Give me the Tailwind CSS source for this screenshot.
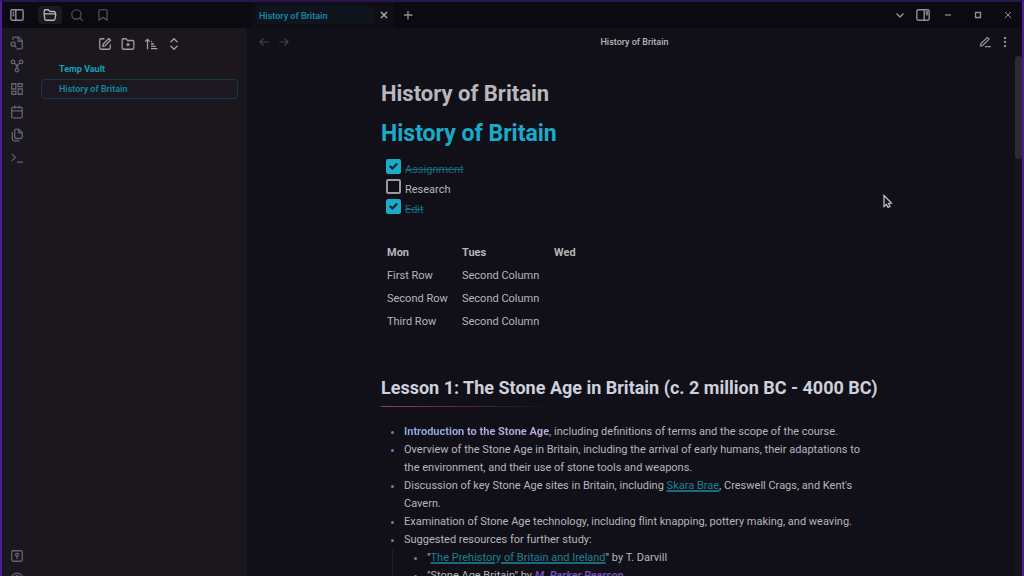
<!DOCTYPE html>
<html lang="en">
<head>
<meta charset="utf-8">
<meta name="viewport" content="width=device-width, initial-scale=1">
<title>History of Britain</title>
<script src="https://cdn.jsdelivr.net/npm/@tailwindcss/browser@4"></script>
</head>
<body class="h-screen overflow-hidden bg-[#111018] font-['Roboto',sans-serif] text-[11px] text-[#b6b6ba]">
<svg class="hidden" aria-hidden="true">
  <symbol id="check" viewBox="0 0 14 14"><path d="M3.500 6.500l2.500 2.300 4.500-4.600" fill="none" stroke="currentColor" stroke-width="2"/></symbol>
</svg>
<div class="flex h-full flex-col overflow-hidden border-x-2 border-t-2 border-x-[#501c94] border-t-[#29154b]">
  <header class="flex h-[26px] shrink-0 bg-[#0b0a11] text-[#929096]">
    <div class="flex w-[244px] shrink-0 items-center pl-2">
      <button aria-label="Toggle left sidebar"><svg class="size-3.5" viewBox="0 0 24 24" fill="none" stroke="currentColor" stroke-width="2.4"><rect x="1.500" y="3" width="21" height="18" rx="2.500"/><path d="M10 3v18M4.500 7h3M4.500 10h3M4.500 13h3"/></svg></button>
      <button aria-label="Files" class="ml-3.5 flex h-[18px] w-6 items-center justify-center rounded bg-[#1b1a21] text-[#b8b6bb]"><svg class="size-3.5" viewBox="0 0 24 24" fill="none" stroke="currentColor" stroke-width="2.2" stroke-linejoin="round"><path d="M2 10V5a2 2 0 0 1 2-2h5l3 3h7a2 2 0 0 1 2 2v2M2 10h20l-1.500 9a2 2 0 0 1-2 2H5a2 2 0 0 1-2-2z"/></svg></button>
      <button aria-label="Search" class="ml-2 text-[#59575f]"><svg class="size-3.5" viewBox="0 0 24 24" fill="none" stroke="currentColor" stroke-width="2"><circle cx="11" cy="11" r="8"/><path d="M17 17l5 5"/></svg></button>
      <button aria-label="Bookmarks" class="ml-3 text-[#59575f]"><svg class="size-3.5" viewBox="0 0 24 24" fill="none" stroke="currentColor" stroke-width="2" stroke-linejoin="round"><path d="M19 21l-7-5-7 5V5a2 2 0 0 1 2-2h10a2 2 0 0 1 2 2z"/></svg></button>
    </div>
    <div class="flex grow items-center">
      <div class="ml-1.5 flex h-full w-[142px] items-center justify-between bg-[#0f0e15] pr-1 pl-1">
        <span class="w-[118px] rounded bg-[#0f141f] pt-0.5 pl-[3px] text-[9px] leading-4 font-semibold text-[#16879d]">History of Britain</span>
        <button aria-label="Close tab" class="text-[#a8a7ac]"><svg class="size-3" viewBox="0 0 12 12" fill="none" stroke="currentColor" stroke-width="1.500"><path d="M3 3l6 6M9 3l-6 6"/></svg></button>
      </div>
      <button aria-label="New tab" class="ml-2"><svg class="size-3" viewBox="0 0 12 12" fill="none" stroke="currentColor" stroke-width="1.300"><path d="M6 2v8.500M2 6h8.500"/></svg></button>
      <div class="ml-auto flex items-center pr-2">
        <button aria-label="Tab list"><svg class="size-3" viewBox="0 0 12 12" fill="none" stroke="currentColor" stroke-width="1.500"><path d="M2.500 4.500L6 8l3.500-3.500"/></svg></button>
        <button aria-label="Toggle right sidebar" class="ml-2.5"><svg class="size-3.5" viewBox="0 0 24 24" fill="none" stroke="currentColor" stroke-width="2.4"><rect x="1.500" y="3" width="21" height="18" rx="2.500"/><path d="M14 3v18M16.500 7h3.500M16.500 10h3.500M19 5v8"/></svg></button>
        <button aria-label="Minimize" class="ml-3"><svg class="size-3" viewBox="0 0 12 12" stroke="currentColor" stroke-width="1.200"><path d="M3 6h6"/></svg></button>
        <button aria-label="Maximize" class="ml-[18px]"><svg class="size-3" viewBox="0 0 12 12" fill="none" stroke="currentColor" stroke-width="1.300"><path d="M3.500 3.500h5v5h-5z"/></svg></button>
        <button aria-label="Close window" class="ml-[18px]"><svg class="size-3" viewBox="0 0 12 12" fill="none" stroke="currentColor"><path d="M3 3l6 6M9 3l-6 6"/></svg></button>
      </div>
    </div>
  </header>

  <div class="flex min-h-0 grow">
    <nav aria-label="Ribbon" class="flex w-[30px] shrink-0 flex-col items-center bg-[#1a171f] pt-2 text-[#66636b]">
      <div class="flex flex-col gap-[9px]">
        <button aria-label="Quick switcher"><svg class="block size-3.5" viewBox="0 0 24 24" fill="none" stroke="currentColor" stroke-width="2.200" stroke-linejoin="round"><path d="M5 7V4a2 2 0 0 1 2-2h8l6 6v12a2 2 0 0 1-2 2h-8M14 2v7h7"/><circle cx="5.500" cy="14" r="3.500"/><path d="M8 17l3 3"/></svg></button>
        <button aria-label="Graph view"><svg class="block size-3.5" viewBox="0 0 24 24" fill="none" stroke="currentColor" stroke-width="2.200"><circle cx="5" cy="5" r="3"/><circle cx="19" cy="5" r="3"/><circle cx="12" cy="19" r="3"/><circle cx="12" cy="11" r="1.500"/><path d="M7 7l4 3M17 7l-4 3M12 12v4"/></svg></button>
        <button aria-label="Canvas"><svg class="block size-3.5" viewBox="0 0 24 24" fill="none" stroke="currentColor" stroke-width="2.200"><path d="M3 3h7v9H3zM14 3h7v5h-7zM14 12h7v9h-7zM3 16h7v5H3z"/></svg></button>
        <button aria-label="Daily note"><svg class="block size-3.5" viewBox="0 0 24 24" fill="none" stroke="currentColor" stroke-width="2.200"><rect x="3" y="4" width="18" height="18" rx="2"/><path d="M3 10h18M8 1v5M16 1v5"/></svg></button>
        <button aria-label="Templates"><svg class="block size-3.5" viewBox="0 0 24 24" fill="none" stroke="currentColor" stroke-width="2.200" stroke-linejoin="round"><path d="M15 2h-5a2 2 0 0 0-2 2v12a2 2 0 0 0 2 2h9a2 2 0 0 0 2-2V8zM15 2v6h6M4 7v12a3 3 0 0 0 3 3h9"/></svg></button>
        <button aria-label="Command palette"><svg class="block size-3.5" viewBox="0 0 24 24" fill="none" stroke="currentColor" stroke-width="2.200"><path d="M3 5l6 6-6 6M12 19h10"/></svg></button>
      </div>
      <div class="mt-auto -mb-2.5 flex flex-col gap-[9px]">
        <button aria-label="Open another vault"><svg class="block size-3.5" viewBox="0 0 24 24" fill="none" stroke="currentColor" stroke-width="2.200"><rect x="3" y="3" width="18" height="18" rx="2"/><circle cx="12" cy="10" r="2.500"/><path d="M12 12v5"/></svg></button>
        <button aria-label="Help"><svg class="block size-3.5" viewBox="0 0 24 24" fill="none" stroke="currentColor" stroke-width="2.200"><circle cx="12" cy="12" r="10"/><path d="M9 9a3 3 0 1 1 4 3l-1 2M12 17v2"/></svg></button>
      </div>
    </nav>

    <aside class="w-[214px] shrink-0 bg-[#1c161d]">
      <div class="flex h-[31px] items-center justify-center gap-[9px] text-[#a19da2]">
        <button aria-label="New note"><svg class="size-3.5" viewBox="0 0 24 24" fill="none" stroke="currentColor" stroke-width="2.200" stroke-linejoin="round"><path d="M11 3H5a2 2 0 0 0-2 2v14a2 2 0 0 0 2 2h14a2 2 0 0 0 2-2v-6M18.500 2.500l3 3L12 15l-4 1 1-4z"/></svg></button>
        <button aria-label="New folder"><svg class="size-3.5" viewBox="0 0 24 24" fill="none" stroke="currentColor" stroke-width="2.200" stroke-linejoin="round"><path d="M22 19a2 2 0 0 1-2 2H4a2 2 0 0 1-2-2V5a2 2 0 0 1 2-2h5l2 3h9a2 2 0 0 1 2 2zM12 10v6M9 13h6"/></svg></button>
        <button aria-label="Change sort order"><svg class="size-3.5" viewBox="0 0 24 24" fill="none" stroke="currentColor" stroke-width="2.200"><path d="M6 21V4M2 8l4-4 4 4M12 8h2M12 12h5M12 16h8M12 20h11"/></svg></button>
        <button aria-label="Expand all"><svg class="size-3.5" viewBox="0 0 24 24" fill="none" stroke="currentColor" stroke-width="2.200"><path d="M6 9l6-6 6 6M6 15l6 6 6-6"/></svg></button>
      </div>
      <div class="flex flex-col gap-px pr-2 pl-[9px] text-[9px]">
        <a href="#" class="flex h-[19px] items-center pt-0.5 pl-[18px] font-bold text-[#16a0ba]">Temp Vault</a>
        <a href="#" class="flex h-5 items-center rounded-sm border border-[#173849] bg-[#1b1821] pt-px pl-[17px] font-semibold text-[#16879d]">History of Britain</a>
      </div>
    </aside>

    <main class="relative flex min-w-0 grow flex-col border-l border-[#16141c] bg-[#111018]">
      <div class="flex h-7 shrink-0 items-center px-2.5">
        <div class="flex w-20 gap-1.5 text-[#424148]">
          <button aria-label="Back"><svg class="size-3.5" viewBox="0 0 24 24" fill="none" stroke="currentColor" stroke-width="2"><path d="M20 12H5M11 6l-6 6 6 6"/></svg></button>
          <button aria-label="Forward"><svg class="size-3.5" viewBox="0 0 24 24" fill="none" stroke="currentColor" stroke-width="2"><path d="M4 12h15M13 6l6 6-6 6"/></svg></button>
        </div>
        <div class="grow pt-0.5 text-center text-[9px] font-medium">History of Britain</div>
        <div class="flex w-20 justify-end gap-1.5 text-[#929096]">
          <button aria-label="Edit"><svg class="size-3.5" viewBox="0 0 24 24" fill="none" stroke="currentColor" stroke-width="2.200" stroke-linejoin="round"><path d="M12 20h10M16 4l3 3L8 18l-4 1 1-4z"/></svg></button>
          <button aria-label="More options"><svg class="size-3.5" viewBox="0 0 24 24" fill="currentColor"><circle cx="12" cy="5" r="2"/><circle cx="12" cy="12" r="2"/><circle cx="12" cy="19" r="2"/></svg></button>
        </div>
      </div>

      <article class="mx-auto w-full max-w-[507px] pt-[25px]">
        <div class="text-[22px] leading-[26px] font-bold text-[#b8b7bb]">History of Britain</div>
        <h1 class="mt-[13px] text-[23px] leading-7 font-bold text-[#19acc9]">History of Britain</h1>
        <ul class="mt-[11px] pl-[5px]">
          <li class="flex h-5 items-start gap-1"><span class="grid"><input id="t1" type="checkbox" checked class="peer col-start-1 row-start-1 size-[15px] appearance-none rounded-[2px] border-2 border-[#9b9a9f] checked:border-[#19acc9] checked:bg-[#19acc9]"><svg class="pointer-events-none invisible col-start-1 row-start-1 size-[15px] text-[#0d2630] peer-checked:visible"><use href="#check"/></svg></span><label for="t1" class="pt-0.5 leading-[18px] text-[#176a7c] line-through">Assignment</label></li>
          <li class="flex h-5 items-start gap-1"><span class="grid"><input id="t2" type="checkbox" class="peer col-start-1 row-start-1 size-[15px] appearance-none rounded-[2px] border-2 border-[#9b9a9f] checked:border-[#19acc9] checked:bg-[#19acc9]"><svg class="pointer-events-none invisible col-start-1 row-start-1 size-[15px] text-[#0d2630] peer-checked:visible"><use href="#check"/></svg></span><label for="t2" class="pt-0.5 leading-[18px]">Research</label></li>
          <li class="flex h-5 items-start gap-1"><span class="grid"><input id="t3" type="checkbox" checked class="peer col-start-1 row-start-1 size-[15px] appearance-none rounded-[2px] border-2 border-[#9b9a9f] checked:border-[#19acc9] checked:bg-[#19acc9]"><svg class="pointer-events-none invisible col-start-1 row-start-1 size-[15px] text-[#0d2630] peer-checked:visible"><use href="#check"/></svg></span><label for="t3" class="pt-0.5 leading-[18px] text-[#176a7c] line-through">Edit</label></li>
        </ul>
        <table class="mt-[23px] text-left [&_td]:h-[23px] [&_td]:px-1.5 [&_th]:h-[23px] [&_th]:px-1.5">
          <thead><tr><th class="min-w-[75px]">Mon</th><th class="min-w-[92px]">Tues</th><th>Wed</th></tr></thead>
          <tbody>
            <tr><td>First Row</td><td>Second Column</td><td></td></tr>
            <tr><td>Second Row</td><td>Second Column</td><td></td></tr>
            <tr><td>Third Row</td><td>Second Column</td><td></td></tr>
          </tbody>
        </table>
        <h2 class="mt-[42px] text-lg leading-6 font-bold whitespace-nowrap text-[#ced1dc]">Lesson 1: The Stone Age in Britain (c. 2 million BC - 4000 BC)</h2>
        <div class="mt-1.5 h-px w-[170px] bg-linear-to-r from-[#94424b] to-transparent"></div>
        <ul class="mt-4 list-disc pl-[23px] leading-[18px] marker:text-[#7375bd]">
          <li><strong class="bg-linear-to-r from-[#86aee2] to-[#c7a8dd] bg-clip-text font-bold text-transparent">Introduction to the Stone Age</strong>, including definitions of terms and the scope of the course.</li>
          <li class="pr-4">Overview of the Stone Age in Britain, including the arrival of early humans, their adaptations to the environment, and their use of stone tools and weapons.</li>
          <li class="pr-4">Discussion of key Stone Age sites in Britain, including <a href="#" class="text-[#1a8092] underline decoration-[#176b7c] decoration-2 underline-offset-1">Skara Brae</a>, Creswell Crags, and Kent's Cavern.</li>
          <li>Examination of Stone Age technology, including flint knapping, pottery making, and weaving.</li>
          <li>Suggested resources for further study:
            <ul class="-ml-3 list-disc border-l border-[#211f28] pl-[34px] marker:text-[#7375bd]">
              <li>"<a href="#" class="text-[#1a8092] underline decoration-[#176b7c] decoration-2 underline-offset-1">The Prehistory of Britain and Ireland</a>" by T. Darvill</li>
              <li>"Stone Age Britain" by <em class="font-semibold text-[#7250b5]">M. Parker Pearson</em></li>
            </ul>
          </li>
        </ul>
      </article>
      <div class="absolute top-7 right-0 bottom-0 w-[7px] bg-[#151519]"><div class="h-[103px] rounded bg-[#2c2b31]"></div></div>
    </main>
  </div>
</div>
<svg class="pointer-events-none absolute top-[194px] left-[882px] h-4 w-3" viewBox="0 0 12 16" fill="#15151a" stroke="#c9c9cc" stroke-width="1.200" aria-hidden="true"><path d="M2 1.500v11l2.500-2 1.500 3 2-1-1.500-3 3-.5z"/></svg>
</body>
</html>
